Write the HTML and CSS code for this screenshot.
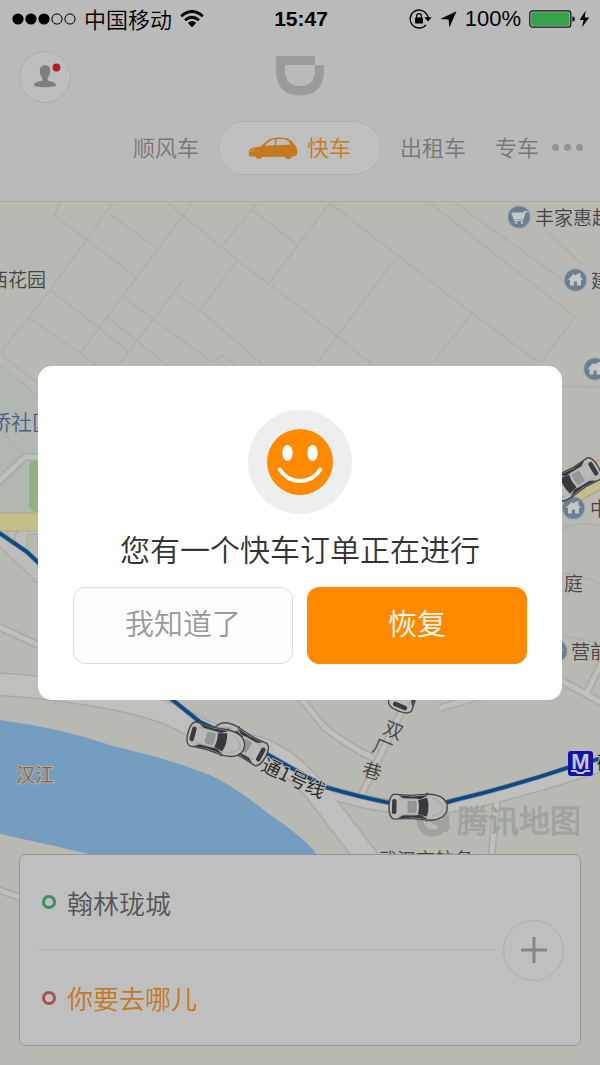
FILE: index.html
```html
<!DOCTYPE html>
<html lang="zh-CN">
<head>
<meta charset="utf-8">
<meta name="viewport" content="width=device-width, initial-scale=1">
<title>快车</title>
<link rel="stylesheet" href="styles.css">
</head>
<body>
<div class="screen">
  <header class="header">
    <div class="status">
      <div class="status-left">
        <svg width="64" height="12" viewBox="0 0 64 12" aria-hidden="true">
          <circle cx="6" cy="6" r="5.6"/><circle cx="19" cy="6" r="5.6"/><circle cx="32" cy="6" r="5.6"/>
          <g fill="none" stroke="#000" stroke-width="1"><circle cx="45" cy="6" r="5.1"/><circle cx="58" cy="6" r="5.1"/></g>
        </svg>
        <span class="carrier">中国移动</span>
        <svg width="24" height="18" viewBox="0 0 24 18" aria-hidden="true">
          <g fill="none" stroke="#000" stroke-width="2.8"><path d="M1.2 6.2Q12-3.2 22.8 6.2"/><path d="M5 10.2Q12 4.2 19 10.2"/></g>
          <path d="M7.8 13Q12 9.2 16.2 13L12 17.2Z"/>
        </svg>
      </div>
      <time class="time">15:47</time>
      <div class="status-right">
        <svg width="23" height="20" viewBox="0 0 23 20" aria-hidden="true">
          <path d="M17.3 4.6A9 9 0 1 0 17 15.8M17.3 4.6Q19 7 19.1 9" fill="none" stroke="#000" stroke-width="1.3"/>
          <path d="M15.4 8.3h7.2L19 12.4Z"/><rect x="6" y="8.6" width="8" height="5.8" rx=".6"/>
          <path d="M7.6 9V7a2.4 2.4 0 0 1 4.8 0v2" fill="none" stroke="#000" stroke-width="1.3"/>
        </svg>
        <svg width="17" height="17" viewBox="0 0 17 17" aria-hidden="true"><path d="M16.5.3 9.4 16.5 8.6 8.6.3 7.9Z"/></svg>
        <span class="percent">100%</span>
        <svg width="61" height="18" viewBox="0 0 61 18" aria-hidden="true">
          <rect x=".8" y=".8" width="41" height="16.4" rx="2.6" fill="none" stroke="#111" stroke-width="1.2"/>
          <rect x="2.2" y="2.2" width="38.2" height="13.6" rx="1.2" fill="#34a248"/>
          <path d="M43.4 6.2q2.6.6 2.6 2.8t-2.6 2.8Z"/>
          <path d="M56.5.8 50.6 10h4L53 17.2 60.2 7.6h-4.4Z"/>
        </svg>
      </div>
    </div>
    <div class="titlebar">
      <button class="avatar" type="button" aria-label="个人中心">
        <svg width="50" height="50" viewBox="0 0 50 50" aria-hidden="true">
          <path d="M25 13.2c3.400 0 5.200 2.100 5.200 5.200 0 3.600-1 5.800-2.600 7.200v2.300c2 2 8.400 1.300 8.400 5.300 0 .9-3.400 2-11 2s-11-1.100-11-2c0-4 6.400-3.300 8.400-5.300v-2.300c-1.600-1.400-2.600-3.600-2.600-7.200 0-3.100 1.800-5.200 5.200-5.200Z" fill="#7e7e7e"/>
          <circle cx="36.500" cy="15.500" r="3.900" fill="#b71c24"/>
        </svg>
      </button>
      <svg class="logo" width="50" height="42" viewBox="0 0 50 42" role="img" aria-label="滴滴">
        <path d="M1 1.500Q1 0 2.500 0H40V9H10V13C10 25 15 30 25 30S40 25 40 13V9H49V14C49 31 40 39.500 25 39.500S1 31 1 14Z" fill="#9d9b99"/>
      </svg>
    </div>
    <nav class="tabs">
      <a href="#shunfeng"><span>顺风车</span></a>
      <a class="active" href="#kuaiche" aria-current="page">
        <svg width="50" height="22" viewBox="0 0 50 22" aria-hidden="true">
          <path d="M1 19.500 .7 14C2 10.800 7 9.900 12.500 9.400 17 6.300 20 1.800 26.500.8c8-.8 14-.1 17.200 3.200 2.500 3 5.400 6.600 5.700 9.500.2 2.500-.2 4.500-1.600 5.200L44 19.500a4 4 0 0 1-7.400.3L14.400 20a4 4 0 0 1-7.200-.4Z" fill="#c4791f"/>
          <path d="M16.500 8.700C20 6 22 2.900 27.200 2.300L26.600 8.300ZM28.700 2.200c5.500-.3 9.800-.2 12 2.200l1.800 3-14.400.9Z" fill="#bebebe"/>
          <path d="M2 14.500q4.500-.6 4-3" stroke="#bebebe" stroke-width=".7" fill="none"/>
        </svg>
        <span>快车</span>
      </a>
      <a href="#taxi"><span>出租车</span></a>
      <a class="last" href="#zhuanche"><span>专车</span></a>
      <button class="more" type="button" aria-label="更多"><i></i><i></i><i></i></button>
    </nav>
  </header>

  <main class="map">
    <svg class="map-canvas" viewBox="0 202 600 863" preserveAspectRatio="xMidYMid slice" role="img" aria-label="地图">
      <defs>
        <g id="car">
          <path d="M8-14 14-10M8 14 14 10" stroke="#555" stroke-width="2"/>
          <path d="M-24-12.500Q-29-11-29 0T-24 12.500L-8 11.500 10 13Q20 13 25 9 30 4 29 0 30-4 25-9 20-13 10-13L-8-11.500Z" fill="#b9b9b8" stroke="#464748" stroke-width="1.400"/>
          <path d="M-20-11.500-6-10.500 10-12 3-8H-14ZM-20 11.500-6 10.500 10 12 3 8H-14Z" fill="#34363a"/>
          <rect x="-26" y="-7.500" width="4.500" height="15" rx="2" fill="#3b3b3e"/>
          <path d="M0-7 9-9.500Q12 0 9 9.500L0 7Q2 0 0-7Z" fill="#38393e"/>
          <rect x="-10" y="-5.500" width="8" height="11" rx="1" fill="#969697" stroke="#858587" stroke-width=".7"/>
          <path d="M-20-8H-1M-20 8H-1M14-9Q24-6 25 0T14 9" fill="none" stroke="#a5a5a5"/>
        </g>
        <g id="home">
          <circle r="12" fill="#a5b0b8"/><circle r="10.800" fill="#6e7e8f"/>
          <path d="M-7.500 0-2-6 0-4.500 1.500-6.500 3-5V-7H5V-3L7.500 0H5.500V5.500H1.500V1.500H-1.500V5.500H-5.500V0Z" fill="#c4c8c8"/>
        </g>
      </defs>
      <rect y="202" width="600" height="863" fill="#b8b9b2"/>
      <path d="M0 367 37 393H80V513H0Z" fill="#b0b8b1"/>
      <g class="lane">
        <path d="M60 203 54 215 85 238 135 276M113 203 50 290 4 348Q1 352 4 357L37 382M108 213 157 248M192 203 80 353M168 203 237 260 300 307 373 365M257 203 223 245M253 210 297 245M270 282 330 203M237 260 200 310M183 280 120 363M175 293 200 310 263 365M122 296 213 363 222 355 237 365M107 317 167 365M50 290 127 350M28 317 97 365"/>
        <path d="M330 203 397 255 472 313 540 363M397 257 317 363M472 313 433 363M430 203 575 317 540 363M455 203 567 283M546 231 583 265M562 386 600 387M0 365 37 395M0 430 22 452M560 530Q580 520 600 526M560 573Q580 574 600 584M560 635 600 643"/>
      </g>
      <path d="M29 467q0-8 9-8v53q-9 0-9-8Z" fill="#8fb381"/>
      <path d="M0 531H60V605L0 547Z" fill="#bcbcba"/>
      <path d="M27 550V534H38V560Z" fill="#b8b9b2" stroke="#aaa"/><path d="M0 547 38 583M6 531H17L14 540H10Z" fill="none" stroke="#a5a093"/>
      <g class="road-edge">
        <path d="M-4 484 25 457H60M-5 625 38 645M298 695 325 728Q350 747 373 758M405 704 360 798M440 708 495 692M555 677 602 703M586 694 602 662M497 800 491 860M-4 889 22 898" stroke-width="8"/>
        <path d="M-5 684Q50 687 105 697T190 724 250 746 315 790L370 862" stroke-width="24"/>
        <path d="M315 787Q385 813 445 807 510 796 605 764" stroke-width="14"/>
      </g>
      <g class="road">
        <path d="M-4 484 25 457H60M-5 625 38 645M298 695 325 728Q350 747 373 758M405 704 360 798M440 708 495 692M555 677 602 703M586 694 602 662M497 800 491 860M-4 889 22 898" stroke-width="5"/>
        <path d="M-5 684Q50 687 105 697T190 724 250 746 315 790L370 862" stroke-width="21"/>
        <path d="M315 787Q385 813 445 807 510 796 605 764" stroke-width="11"/>
      </g>
      <path d="M0 720Q60 728 110 745L160 758Q190 767 207 774 230 783 273 817 312 843 320 860H115L50 845 0 834Z" fill="#759dbf"/>
      <path d="M-2 513H50V531H-2Z" fill="#c3bf86" stroke="#b1aa83"/>
      <path d="M550 503 606 471" stroke="#aaa17b" stroke-width="27"/><path d="M550 503 606 471" stroke="#c3bf8c" stroke-width="25"/>
      <path d="M-2 532 27 552 45 569 170 698 200 722 258 749 325 787Q360 797 390 803 420 811 455 800 510 787 570 767L602 758" fill="none" stroke="#6f91a5" stroke-width="5"/>
      <path d="M-2 532 27 552 45 569 170 698 200 722 258 749 325 787Q360 797 390 803 420 811 455 800 510 787 570 767L602 758" fill="none" stroke="#124781" stroke-width="3.600"/>

      <g transform="translate(519 217)"><circle r="12" fill="#a5b0b8"/><circle r="10.800" fill="#6e7e8f"/><path d="M-7.500-4.500H4L5-6H8.500V-4.500H6.500L4.500 2.500H-5.500ZM-5 3H4V4H-5Z" fill="#c4c8c8"/><circle cx="-3" cy="5.500" r="1.300" fill="#c4c8c8"/><circle cx="3" cy="5.500" r="1.300" fill="#c4c8c8"/></g>
      <use href="#home" x="575.500" y="280"/><use href="#home" x="595" y="369"/><use href="#home" x="573.500" y="508"/><use href="#home" x="556" y="651"/>

      <g fill="none" stroke="#a0a29f" stroke-width="7"><circle cx="433" cy="820" r="13"/><path d="M430 818 449 829"/></g>
      <text class="watermark" x="457" y="832">腾讯地图</text>
      <g class="place">
        <text x="535" y="225">丰家惠超</text><text x="-11" y="287">西花园</text><text x="591" y="288">建</text>
        <text x="590" y="516">中</text><text x="564" y="591">庭</text><text x="571" y="659">营前</text>
        <text x="378" y="867">武汉市航务</text>
        <text class="district" x="-10" y="430">桥社区</text>
        <text class="river" x="16" y="782">汉江</text>
        <text class="dark" transform="translate(260 770) rotate(25)">通1号线</text>
        <text transform="translate(382 733) rotate(22)">双</text><text transform="translate(371 751) rotate(22)">厂</text><text transform="translate(361 775) rotate(16)">巷</text>
        <text class="dark" x="597" y="770">硚</text>
      </g>
      <rect x="568" y="751" width="25" height="25" rx="3" fill="#1414a4"/>
      <text class="metro" x="580.500" y="769">M</text>
      <path d="M571 771h5l2 2h5l2-2h5" stroke="#c6c6d8" stroke-width="1.800" fill="none"/>

      <use href="#car" transform="translate(409 684) rotate(-68)"/>
      <use href="#car" transform="translate(573 481) rotate(149)"/>
      <use href="#car" transform="translate(240 743) rotate(209)"/>
      <use href="#car" transform="translate(216 740) rotate(15)"/>
      <use href="#car" transform="translate(418 807) rotate(1)"/>
    </svg>

    <section class="trip">
      <div class="stops">
        <button class="stop from" type="button"><span class="ring"></span>翰林珑城</button>
        <button class="stop to" type="button"><span class="ring"></span>你要去哪儿</button>
      </div>
      <button class="add" type="button" aria-label="添加">
        <svg width="26" height="26" viewBox="0 0 26 26" aria-hidden="true"><path d="M13 0V26M0 13H26" stroke="#858585" stroke-width="3"/></svg>
      </button>
    </section>
  </main>
</div>

<div class="overlay">
  <div class="dialog" role="dialog" aria-modal="true" aria-labelledby="dialog-title">
    <div class="face">
      <svg width="66" height="66" viewBox="0 0 66 66" aria-hidden="true">
        <circle cx="33" cy="33" r="33" fill="#ff8a00"/>
        <g fill="#fff"><ellipse cx="20.500" cy="24" rx="5.200" ry="8"/><ellipse cx="45.500" cy="24" rx="5.200" ry="8"/></g>
        <path d="M12.800 40.500a23.500 23.500 0 0 0 40.400 0" fill="none" stroke="#fff" stroke-width="4" stroke-linecap="round"/>
      </svg>
    </div>
    <h1 id="dialog-title" class="dialog-title">您有一个快车订单正在进行</h1>
    <div class="actions">
      <button class="btn" type="button">我知道了</button>
      <button class="btn primary" type="button">恢复</button>
    </div>
  </div>
</div>
</body>
</html>
```
FILE: styles.css
```css
* { box-sizing: border-box; }

body {
  margin: 0;
  font-family: "Noto Sans CJK SC DemiLight", "Noto Sans CJK SC", sans-serif;
  font-weight: 350;
  background: #bababa;
}

button {
  margin: 0;
  padding: 0;
  border: 0;
  background: none;
  font: inherit;
  color: inherit;
}

a { color: inherit; text-decoration: none; }
svg { display: block; flex: none; }

.screen {
  display: flex;
  flex-direction: column;
  min-height: 100vh;
}

.header {
  background: #bababa;
  border-bottom: 1px solid #a8a8a7;
}

.status {
  display: grid;
  grid-template-columns: 1fr auto 1fr;
  align-items: center;
  height: 38px;
  padding: 0 10px 0 12px;
  font-size: 22px;
  line-height: 34px;
  color: #000;
}

.status-left, .status-right {
  display: flex;
  align-items: center;
  gap: 8px;
}

.status-right { justify-content: flex-end; }
.carrier { padding-bottom: 3px; }

.time, .percent { font-family: "Liberation Sans", sans-serif; }
.time { font-size: 21px; font-weight: 700; }
.percent { font-size: 22px; font-weight: 400; }

.titlebar {
  display: grid;
  grid-template-columns: 1fr auto 1fr;
  align-items: center;
  height: 78px;
  padding: 0 19px;
}

.avatar {
  width: 52px;
  height: 52px;
  border: 1px solid #acacac;
  border-radius: 50%;
  background: #bdbdbd;
}

.tabs {
  display: flex;
  align-items: center;
  justify-content: flex-end;
  gap: 19px;
  height: 85px;
  padding: 0 17px 22px 0;
  font-size: 22px;
  line-height: 32px;
  color: #777;
}

.tabs span {
  display: block;
  padding-bottom: 4px;
}

.tabs .active {
  display: flex;
  align-items: center;
  gap: 9px;
  height: 54px;
  padding: 0 29px;
  border: 1px solid #b0b0b0;
  border-radius: 27px;
  background: #bfbfbf;
  color: #c67b20;
}

.tabs .last { margin-left: 10px; }

.more {
  display: flex;
  gap: 5px;
  margin-left: -6px;
}

.more i {
  width: 7px;
  height: 7px;
  border-radius: 50%;
  background: #929292;
}

.map {
  position: relative;
  display: flex;
  flex: 1;
  flex-direction: column;
  justify-content: flex-end;
  padding: 19px;
}

.map-canvas {
  position: absolute;
  inset: 0;
  width: 100%;
  height: 100%;
}

.lane { fill: none; stroke: #b0b1ab; stroke-width: 2; }
.road, .road-edge { fill: none; }
.road-edge { stroke: #a8a9a2; }
.road { stroke: #bfbfbd; }

.place { font-size: 19px; fill: #444; }
.district { font-size: 21px; fill: #4b5d87; }
.river { fill: #806744; stroke: #b6b0a4; stroke-width: 2; paint-order: stroke; }
.dark { fill: #222; stroke: #b8b9b2; stroke-width: 2; paint-order: stroke; }
.watermark { font-size: 31px; font-weight: 700; fill: #a0a29f; }
.metro {
  font-family: "Liberation Sans", sans-serif;
  font-size: 22px;
  font-weight: 700;
  text-anchor: middle;
  fill: #c6c6d8;
}

.trip {
  position: relative;
  display: flex;
  align-items: center;
  gap: 7px;
  padding: 0 16px 0 18px;
  border: 1px solid #969696;
  border-radius: 7px;
  background: #bfbfbf;
}

.stops { flex: 1; }

.stop {
  display: flex;
  align-items: center;
  gap: 11px;
  width: 100%;
  height: 95px;
  padding-left: 4px;
  font-size: 26px;
  text-align: left;
}

.from { border-bottom: 1px solid #b0b0b0; color: #555; }
.to { color: #c4781c; }

.ring {
  width: 14px;
  height: 14px;
  border: 3px solid;
  border-radius: 50%;
}

.from .ring { border-color: #398e62; }
.to .ring { border-color: #ac4c5b; }

.add {
  display: grid;
  place-items: center;
  width: 61px;
  height: 61px;
  border: 1px solid #adadad;
  border-radius: 50%;
}

.overlay {
  position: fixed;
  inset: 0;
  display: flex;
  align-items: center;
  justify-content: center;
  padding: 38px;
}

.dialog {
  width: 100%;
  max-width: 524px;
  padding: 44px 35px 36px;
  border-radius: 14px;
  background: #fff;
}

.face {
  display: grid;
  place-items: center;
  width: 104px;
  height: 104px;
  margin: 0 auto;
  border-radius: 50%;
  background: #eee;
}

.dialog-title {
  margin: 0;
  padding-bottom: 4px;
  font-size: 30px;
  font-weight: inherit;
  line-height: 69px;
  text-align: center;
  white-space: nowrap;
  color: #333;
}

.actions {
  display: grid;
  grid-template-columns: 1fr 1fr;
  gap: 14px;
}

.btn {
  height: 77px;
  padding-bottom: 6px;
  border: 1px solid #ddd;
  border-radius: 12px;
  background: #fdfdfd;
  font-size: 29px;
  color: #999;
}

.primary {
  border-color: #ff8a00;
  background: #ff8a00;
  color: #fff;
}
```
